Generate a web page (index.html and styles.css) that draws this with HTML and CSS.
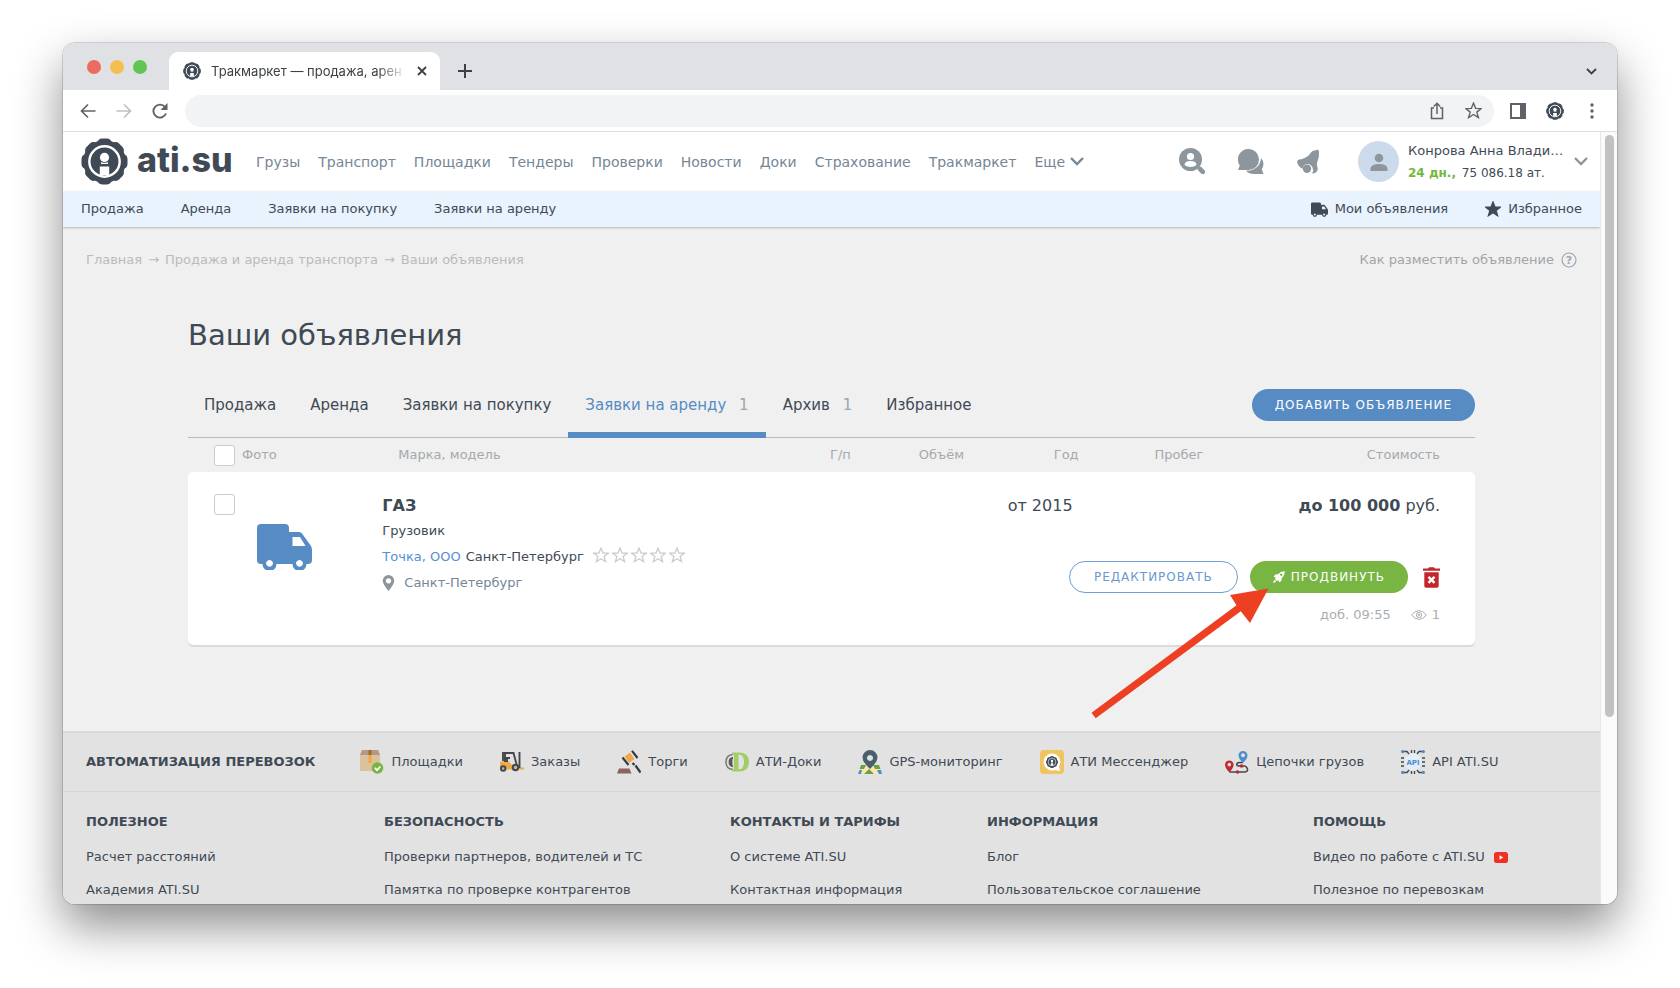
FILE: index.html
```html
<!DOCTYPE html>
<html lang="ru">
<head>
<meta charset="utf-8">
<title>Тракмаркет — продажа, аренда</title>
<link rel="stylesheet" href="styles.css">
</head>
<body>
<svg class="sprite" aria-hidden="true">
  <symbol id="i-gear" viewBox="0 0 48 48">
    <g fill="currentColor"><circle cx="24" cy="24" r="21.8"/>
    <rect x="16.500" y="0.500" width="15" height="47" rx="5"/><rect x="16.500" y="0.500" width="15" height="47" rx="5" transform="rotate(45 24 24)"/><rect x="16.500" y="0.500" width="15" height="47" rx="5" transform="rotate(90 24 24)"/><rect x="16.500" y="0.500" width="15" height="47" rx="5" transform="rotate(135 24 24)"/></g>
    <circle cx="24" cy="24" r="15.500" fill="none" stroke="#fff" stroke-width="2.500"/>
    <circle cx="24" cy="19.800" r="4.700" fill="#fff"/>
    <path d="M19.200 29h9.600v9h-9.600z" fill="#fff"/>
    <path d="M20.500 24.500q3.500 1.800 7 0v2h-7z" fill="#fff"/>
  </symbol>
  <symbol id="i-truck" viewBox="0 0 55 46"><path fill="currentColor" fill-rule="evenodd" d="M4 0H28a4 4 0 0 1 4 4V8H42q2 0 3 1.500L54 22q1 2 1 4V36a4 4 0 0 1-4 4H49.500A7 7 0 0 1 35.500 40H19.500A7 7 0 0 1 5.500 40H4a4 4 0 0 1-4-4V4a4 4 0 0 1 4-4ZM35.500 13V22H48.500L43 13ZM12.500 36a3.400 3.400 0 1 0 .01 0ZM42.500 36a3.400 3.400 0 1 0 .01 0Z"/></symbol>
  <symbol id="i-chev" viewBox="0 0 14 9"><path d="M1 1l6 6 6-6" fill="none" stroke="currentColor" stroke-width="2.400"/></symbol>
  <symbol id="i-star" viewBox="0 0 16 16"><path d="M8 1l2 5 5.200.2-4.100 3.300 1.500 5.200L8 11.800l-4.600 2.900 1.500-5.200L.8 6.200 6 6z" stroke="currentColor" stroke-width="1.300"/></symbol>
</svg>
<div class="window">
  <div class="tabstrip">
    <div class="lights"><i class="red"></i><i class="amber"></i><i class="green"></i></div>
    <div class="tab">
      <svg class="favicon"><use href="#i-gear"/></svg>
      <span class="tab-title">Тракмаркет — продажа, арен</span>
      <button class="bare" aria-label="Закрыть"><svg width="10" height="10" viewBox="0 0 10 10"><path d="M1 1l8 8M9 1l-8 8" stroke="#3c4043" stroke-width="1.800"/></svg></button>
    </div>
    <button class="bare new-tab" aria-label="Новая вкладка"><svg width="14" height="14" viewBox="0 0 14 14"><path d="M7 0v14M0 7h14" stroke="#3c4043" stroke-width="2"/></svg></button>
    <button class="bare tab-search" aria-label="Поиск вкладок"><svg width="11" height="7" viewBox="0 0 11 7"><path d="M1 1l4.500 4.500L10 1" fill="none" stroke="#3c4043" stroke-width="1.800"/></svg></button>
  </div>
  <div class="toolbar">
    <button class="bare" aria-label="Назад"><svg width="16" height="16" viewBox="0 0 16 16"><path d="M15.500 8H2M8 1.500L1.500 8 8 14.500" fill="none" stroke="#5f6368" stroke-width="1.700"/></svg></button>
    <button class="bare" aria-label="Вперёд"><svg width="16" height="16" viewBox="0 0 16 16"><path d="M.5 8H14M8 1.500L14.500 8 8 14.500" fill="none" stroke="#bdc1c6" stroke-width="1.700"/></svg></button>
    <button class="bare" aria-label="Обновить"><svg width="16" height="16" viewBox="0 0 16 16"><path d="M14 10.500A6.500 6.500 0 1 1 13 4" fill="none" stroke="#5f6368" stroke-width="1.900"/><path d="M15.500 0v7H8.500z" fill="#5f6368"/></svg></button>
    <div class="omnibox">
      <input type="text" aria-label="Адрес">
      <button class="bare" aria-label="Поделиться"><svg width="16" height="18" viewBox="0 0 16 18"><path d="M5 6H2.500v10.500h11V6H11M8 12V1.500M4.800 4.500L8 1.300l3.200 3.200" fill="none" stroke="#5f6368" stroke-width="1.500"/></svg></button>
      <button class="bare star-out" aria-label="В закладки"><svg width="17" height="17"><use href="#i-star"/></svg></button>
    </div>
    <button class="bare" aria-label="Боковая панель"><svg width="16" height="16" viewBox="0 0 16 16"><path d="M1 1h14v14H1z" fill="#fff" stroke="#5f6368" stroke-width="2"/><path d="M10 1h5v14h-5z" fill="#5f6368"/></svg></button>
    <button class="bare" aria-label="Профиль"><svg class="favicon"><use href="#i-gear"/></svg></button>
    <button class="bare" aria-label="Меню"><svg width="16" height="16" viewBox="0 0 16 16" fill="#5f6368"><circle cx="8" cy="2" r="1.700"/><circle cx="8" cy="8" r="1.700"/><circle cx="8" cy="14" r="1.700"/></svg></button>
  </div>
  <div class="viewport">
    <div class="page">
      <header class="header">
        <a class="logo" href="#"><svg class="logo-mark"><use href="#i-gear"/></svg><span>ati.su</span></a>
        <nav class="mainnav">
          <a href="#">Грузы</a><a href="#">Транспорт</a><a href="#">Площадки</a><a href="#">Тендеры</a><a href="#">Проверки</a><a href="#">Новости</a><a href="#">Доки</a><a href="#">Страхование</a><a href="#">Тракмаркет</a><a href="#" class="more">Еще <svg width="14" height="9"><use href="#i-chev"/></svg></a>
        </nav>
        <div class="tools">
          <button class="bare" aria-label="Поиск контакта"><svg width="26" height="27" viewBox="0 0 26 27"><circle cx="11.500" cy="11.500" r="11.500" fill="#8d969d"/><path d="M18 18l2.500 2.500" stroke="#8d969d" stroke-width="2.500"/><path d="M21 21l2.800 2.800" stroke="#8d969d" stroke-width="4.600" stroke-linecap="round"/><circle cx="11.500" cy="8.500" r="3.600" fill="#fff"/><path d="M5.500 17q0-4 6-4t6 4q-2.500 2-6 2t-6-2z" fill="#fff"/></svg></button>
          <button class="bare" aria-label="Сообщения"><svg width="26" height="26" viewBox="0 0 26 26" fill="#8d969d"><path d="M23 9q3.500 4 2 8.500-.5 1.500-1.300 2.500l1.800 5H16q-5 0-8-3.200 9 0 13-6 2-3.500 2-6.800z"/><path d="M10.500 0A10.500 10.500 0 0 1 10.500 21H0l1.800-4.500A10.500 10.500 0 0 1 10.500 0z"/></svg></button>
          <button class="bare" aria-label="Уведомления"><svg width="24" height="25" viewBox="0 0 24 25" fill="#8d969d"><path d="M20 .5q2 .3 2 2.500Q22.300 9 20.500 12.500q-1 2-.3 4.500 1 3 0 5-1.500 2.500-5.200 2.500 2-3 .5-6Q13 13.500 8 15.500 5.500 17 5.500 20 1 17 .2 13.500 0 11 2 10.500q2.500 0 4.500-1Q11 8 14 3.500 16 1 18.500 1.500z"/><circle cx="10" cy="19.700" r="4.200"/></svg></button>
        </div>
        <div class="user">
          <span class="avatar"><svg width="18" height="18" viewBox="0 0 18 18" fill="#8d969d"><circle cx="9" cy="5" r="4.300"/><path d="M.5 18v-2.500Q1 11 9 11t8.500 4.500V18z"/></svg></span>
          <div class="user-text"><div>Конрова Анна Влади…</div><div class="balance"><b>24 дн.,</b> 75 086.18 ат.</div></div>
          <button class="bare grey" aria-label="Меню пользователя"><svg width="14" height="9"><use href="#i-chev"/></svg></button>
        </div>
      </header>
      <nav class="subnav">
        <a href="#">Продажа</a><a href="#">Аренда</a><a href="#">Заявки на покупку</a><a href="#">Заявки на аренду</a>
        <a href="#" class="push"><svg width="17" height="15"><use href="#i-truck"/></svg>Мои объявления</a><a href="#"><svg width="16" height="16" fill="currentColor"><use href="#i-star"/></svg>Избранное</a>
      </nav>
      <div class="crumbs">
        <div class="trail"><a href="#">Главная</a><span>→</span><a href="#">Продажа и аренда транспорта</a><span>→</span><a href="#">Ваши объявления</a></div>
        <a href="#" class="help">Как разместить объявление <svg width="16" height="16" viewBox="0 0 16 16"><circle cx="8" cy="8" r="7" fill="none" stroke="currentColor" stroke-width="1.200"/><text x="8" y="12" text-anchor="middle">?</text></svg></a>
      </div>
      <main class="main">
        <h1>Ваши объявления</h1>
        <div class="tabs">
          <a href="#">Продажа</a><a href="#">Аренда</a><a href="#">Заявки на покупку</a><a href="#" class="active">Заявки на аренду <span>1</span></a><a href="#">Архив <span>1</span></a><a href="#">Избранное</a>
          <button class="btn blue">ДОБАВИТЬ ОБЪЯВЛЕНИЕ</button>
        </div>
        <table class="ads">
          <colgroup><col class="c-photo"><col class="c-model"><col class="c-load"><col class="c-vol"><col class="c-year"><col class="c-run"><col class="c-price"></colgroup>
          <thead><tr><th class="first"><label><input type="checkbox">Фото</label></th><th class="model">Марка, модель</th><th>Г/п</th><th>Объём</th><th>Год</th><th>Пробег</th><th class="last">Стоимость</th></tr></thead>
          <tbody>
            <tr class="values"><td class="first" rowspan="2"><div class="photo"><input type="checkbox" aria-label="Выбрать ГАЗ"><svg width="55" height="46"><use href="#i-truck"/></svg></div></td>
              <td class="info" rowspan="2"><strong>ГАЗ</strong><div>Грузовик</div><div class="firm"><a href="#">Точка, ООО</a> Санкт-Петербург <span class="stars"><svg><use href="#i-star"/></svg><svg><use href="#i-star"/></svg><svg><use href="#i-star"/></svg><svg><use href="#i-star"/></svg><svg><use href="#i-star"/></svg></span></div><div class="place"><svg width="13" height="16" viewBox="0 0 13 16"><path fill="#8d969d" fill-rule="evenodd" d="M6.500 0A5.800 5.800 0 0 1 12.300 5.800Q12.300 9 6.500 16 .7 9 .7 5.800A5.800 5.800 0 0 1 6.500 0zM6.500 3.200a2.700 2.700 0 1 0 .01 0z"/></svg>Санкт-Петербург</div></td>
              <td></td><td></td><td class="year">от 2015</td><td></td><td class="last"><b>до 100 000</b> руб.</td></tr>
            <tr><td class="last actions" colspan="5">
              <div class="buttons"><button class="btn outline">РЕДАКТИРОВАТЬ</button><button class="btn green"><svg width="12" height="12" viewBox="0 0 12 12"><path fill="#fff" fill-rule="evenodd" d="M11.700.3Q7.500.2 5 3.200L2.200 3.500.5 6l2.300.2Q2 7.500 2 8.200L3.800 10q.8 0 2-.8L6 11.500l2.500-1.700.3-2.800Q11.800 4.500 11.700.3zM8.300 2.500a1.200 1.200 0 1 1-.01 0zM1.500 8.800Q.3 9.800.2 11.800q2-.1 3-1.300z"/></svg>ПРОДВИНУТЬ</button><button class="bare" aria-label="Удалить"><svg width="17" height="21" viewBox="0 0 17 21"><path d="M0 1.500h5L6 .3h5l1 1.200h5v2.200H0z" fill="#c1272d"/><path d="M1.300 5.300h14.400V19q0 1.800-1.800 1.800H3.100Q1.300 20.800 1.300 19z" fill="#c1272d"/><path d="M5.500 9.800l6 6M11.500 9.800l-6 6" stroke="#fff" stroke-width="2.400"/></svg></button></div>
              <div class="meta"><span>доб. 09:55</span><span class="views"><svg width="16" height="10" viewBox="0 0 16 10" fill="none" stroke="currentColor"><path d="M.6 5Q4 .6 8 .6T15.400 5Q12 9.400 8 9.400T.6 5z"/><circle cx="8" cy="5" r="2.600"/><circle cx="8" cy="5" r=".8"/></svg>1</span></div>
            </td></tr>
          </tbody>
        </table>
        <svg class="arrow" width="180" height="132" viewBox="0 0 180 132" fill="#ed4023"><path d="M.5 124.700L145.500 17.200 139 7 177.500.5 159 35 149.800 23.200 4.700 130.300z"/></svg>
      </main>
      <footer>
        <div class="auto">
          <h2>АВТОМАТИЗАЦИЯ ПЕРЕВОЗОК</h2>
          <a href="#"><svg viewBox="0 0 24 24"><path d="M2 0h16l2 5v16H0V5z" fill="#dcc29c"/><path d="M2 0h16l2 5H0z" fill="#b39a86"/><path d="M8.500 0h3v5h-3z" fill="#a3682b"/><path d="M8.500 5h3v8h-3z" fill="#efa93d"/><circle cx="17.500" cy="18" r="5.800" fill="#78b543"/><path d="M14.800 17.800l2.200 2.300 3.400-3.600" fill="none" stroke="#fff" stroke-width="1.800"/></svg>Площадки</a>
          <a href="#"><svg viewBox="0 0 24 24"><path d="M1 11.500h8l2 3h6v5H0v-7z" fill="#efa94a"/><path d="M18 17.500h6v2h-6z" fill="#efa94a"/><path d="M3 11V3h10.500l3.500 13M5 3v5h5M19.500 2v16" fill="none" stroke="#46474b" stroke-width="1.900"/><path d="M4 7h4v5H4z" fill="#46474b"/><g fill="#bbb" stroke="#46474b" stroke-width="2"><circle cx="3.200" cy="18.500" r="2.200"/><circle cx="15.500" cy="17.500" r="2.700"/></g></svg>Заказы</a>
          <a href="#"><svg viewBox="0 0 24 24"><path d="M2 18.500h10.500l2 5H0z" fill="#8c6558"/><path d="M7.500 6.500l5.500-4 4.500 6.500-5.500 4z" fill="#efa94a"/><path d="M5.500 7.500l6 7.500M15 .8l5.500 7.200M15.500 13l2 2M18.500 15.500l5 7" stroke="#333a40" stroke-width="2.200"/></svg>Торги</a>
          <a href="#"><svg viewBox="0 0 24 24"><path d="M8 4.500Q1 5 1 12t7 7.500" fill="none" stroke="#777" stroke-width="1.500"/><path d="M8 8Q4.500 8.500 4.500 12T8 16.500M6.500 9v7" fill="none" stroke="#555" stroke-width="1.800"/><path fill-rule="evenodd" fill="#a2cc66" d="M7 2.500h7q10 0 10 9.500t-10 9.500H7v-2h2v-15H7zM13.500 4.500v15q5.500-.2 5.500-7.500t-5.500-7.500z"/></svg>АТИ-Доки</a>
          <a href="#"><svg viewBox="0 0 24 24"><path d="M3 15h18l3 9H0z" fill="#f8e7b0"/><path d="M3 15h5l-2 4H1.600zM15 15h6l1.500 4H17zM6 24l5-5 5 5z" fill="#6f9f45"/><path d="M1.600 20H4l-1 4H0zM19 20h4l1 4h-3z" fill="#4f8ccb"/><path fill="#4a5f6d" fill-rule="evenodd" d="M12 0a7.500 7.500 0 0 1 7.500 7.500Q19.500 12 12 19 4.500 12 4.500 7.500A7.500 7.500 0 0 1 12 0zM12 5a3 3 0 1 0 .01 0z"/></svg>GPS-мониторинг</a>
          <a href="#"><svg viewBox="0 0 24 24"><rect width="24" height="24" rx="4" fill="#efc561"/><path d="M12 3.500a8.500 8.500 0 1 0 3 16.500l5 1-1-4.500A8.500 8.500 0 0 0 12 3.500z" fill="#fff"/><svg x="6" y="6" width="12" height="12" viewBox="0 0 48 48"><use href="#i-gear" width="48" height="48"/></svg></svg>АТИ Мессенджер</a>
          <a href="#"><svg viewBox="0 0 24 24"><path d="M4.500 22H20q3-.5 2.500-3t-3-3H14q-3-.3-2-2.500.6-1 3-1h3" fill="none" stroke="#46474b" stroke-width="1.500"/><path fill="#c1272d" fill-rule="evenodd" d="M4.300 10.500a4.300 4.300 0 0 1 4.300 4.300q0 3-4.300 7.700Q0 17.800 0 14.800a4.300 4.300 0 0 1 4.300-4.300zm0 2.300a1.800 1.800 0 1 0 .01 0z"/><path fill="#4f8ccb" fill-rule="evenodd" d="M18 1a4.500 4.500 0 0 1 4.500 4.500q0 3-4.500 7.500-4.500-4.500-4.500-7.500A4.500 4.500 0 0 1 18 1zm0 2.300a2 2 0 1 0 .01 0z"/><circle cx="16.500" cy="16" r="1.800" fill="#c1272d"/><circle cx="12.500" cy="22" r="1.800" fill="#c1272d"/></svg>Цепочки грузов</a>
          <a href="#"><svg viewBox="0 0 24 24"><circle cx="12" cy="12" r="8.500" fill="#e2eefa"/><path d="M0 8h3M0 12h3M0 16h3M21 8h3M21 12h3M21 16h3M10.500 0v3M13.500 0v3M10.500 21v3M13.500 21v3M2 1.500h4l2 2.500M22 1.500h-4L16 4M2 22.500h4L8 20M22 22.500h-4L16 20" fill="none" stroke="#46474b" stroke-width="1.400"/><g fill="#4f8ccb"><circle cx="1.600" cy="1.600" r="1.600"/><circle cx="22.400" cy="1.600" r="1.600"/><circle cx="1.600" cy="22.400" r="1.600"/><circle cx="22.400" cy="22.400" r="1.600"/></g><text class="api" x="12" y="14.500" text-anchor="middle">API</text></svg>API ATI.SU</a>
        </div>
        <div class="cols">
          <section><h2>ПОЛЕЗНОЕ</h2><a href="#">Расчет расстояний</a><a href="#">Академия ATI.SU</a></section>
          <section><h2>БЕЗОПАСНОСТЬ</h2><a href="#">Проверки партнеров, водителей и ТС</a><a href="#">Памятка по проверке контрагентов</a></section>
          <section><h2>КОНТАКТЫ И ТАРИФЫ</h2><a href="#">О системе ATI.SU</a><a href="#">Контактная информация</a></section>
          <section><h2>ИНФОРМАЦИЯ</h2><a href="#">Блог</a><a href="#">Пользовательское соглашение</a></section>
          <section><h2>ПОМОЩЬ</h2><a href="#">Видео по работе с ATI.SU <svg width="14" height="11" viewBox="0 0 14 11"><rect width="14" height="11" rx="2.500" fill="#ee3124"/><path d="M5.500 3.300v4.400L9.300 5.500z" fill="#fff"/></svg></a><a href="#">Полезное по перевозкам</a></section>
        </div>
      </footer>
    </div>
    <div class="scrollbar"><div class="thumb"></div></div>
  </div>
</div>
</body>
</html>
```

FILE: styles.css
```css
* { box-sizing: border-box; }
body { margin: 0; height: 100vh; padding: 43px 63px 84px; display: flex; background: #fff; color: #3f4a55; font: 13px/20px "DejaVu Sans", sans-serif; overflow: hidden; }
a { color: inherit; text-decoration: none; }
h1, h2 { margin: 0; }
svg { flex: none; }
.sprite { position: absolute; width: 0; height: 0; }
.bare { display: flex; align-items: center; justify-content: center; padding: 0; border: 0; background: none; color: inherit; }
.window { flex: 1; min-width: 0; display: flex; flex-direction: column; overflow: hidden; border-radius: 12px; background: #fff; box-shadow: 0 0 0 1px rgba(0,0,0,.14), 0 22px 48px rgba(0,0,0,.45); }

.tabstrip { flex: none; display: flex; align-items: flex-end; height: 47px; padding: 0 20px 0 24px; background: #dfe1e5; }
.lights { display: flex; gap: 9px; padding-bottom: 16px; margin-right: 22px; }
.lights i { width: 14px; height: 14px; border-radius: 50%; }
.red { background: #ed6a5e; }
.amber { background: #f5bf4f; }
.green { background: #61c554; }
.tab { display: flex; align-items: center; gap: 10px; width: 271px; height: 38px; padding: 0 13px 0 14px; border-radius: 9px 9px 0 0; background: #fff; }
.favicon { width: 18px; height: 18px; color: #3f4a55; }
.tab-title { flex: 1; white-space: nowrap; color: #3c4043; font: 13px/20px Inter, sans-serif; mask-image: linear-gradient(90deg, #000 85%, transparent); }
.new-tab { height: 38px; margin-left: 18px; }
.tab-search { height: 38px; margin-left: auto; }

.toolbar { flex: none; display: flex; align-items: center; gap: 20px; height: 42px; padding: 0 17px; border-bottom: 1px solid #dcdee1; }
.omnibox { flex: 1; display: flex; align-items: center; gap: 20px; height: 32px; margin: 0 -5px 0 -3px; padding: 0 12px 0 16px; border-radius: 16px; background: #f1f3f4; }
.omnibox input { flex: 1; min-width: 0; border: 0; background: none; outline: 0; }
.star-out { color: #5f6368; fill: none; }
.toolbar .omnibox + .bare { margin-left: 1px; }

.viewport { flex: 1; min-height: 0; display: flex; }
.page { flex: 1; min-width: 0; overflow: hidden; background: #f0f0f0; }
.scrollbar { width: 17px; padding: 3px 4px; background: #fafafa; border-left: 1px solid #e6e6e6; }
.thumb { width: 9px; height: 76%; border-radius: 5px; background: #c1c1c1; }

.header { display: flex; align-items: center; height: 59px; padding: 0 12px 0 18px; background: #fff; }
.logo { display: flex; align-items: center; gap: 9px; }
.logo-mark { width: 47px; height: 47px; }
.logo span { width: 92px; padding-bottom: 4px; font: 800 34px/44px Inter, sans-serif; }
.mainnav { display: flex; gap: 18px; margin-left: 27px; color: #758695; font-size: 14px; white-space: nowrap; }
.more { display: flex; align-items: center; gap: 5px; }
.tools { display: flex; gap: 33px; margin-left: auto; margin-right: 37px; }
.user { display: flex; align-items: center; }
.avatar { display: flex; align-items: center; justify-content: center; width: 41px; height: 41px; margin-right: 9px; border-radius: 50%; background: #ccdbec; }
.user-text { width: 157px; margin-right: 9px; line-height: 22px; white-space: nowrap; }
.balance { font-size: 12px; }
.balance b { margin-right: 2px; color: #72b83c; }
.grey { color: #8d969d; }

.subnav { position: relative; display: flex; gap: 37px; align-items: center; height: 36px; padding: 0 18px; background: #e8f3fe; box-shadow: 0 1px 2px rgba(0,0,0,.25); }
.subnav a { display: flex; align-items: center; gap: 7px; }
.push { margin-left: auto; }

.crumbs { display: flex; justify-content: space-between; padding: 23px 23px 0; color: #bbb; }
.trail { display: flex; gap: 6px; }
.help { display: flex; align-items: center; gap: 7px; color: #a0a5a9; }
.help text { font-size: 11px; font-weight: bold; fill: currentColor; }

.main { position: relative; padding: 45px 125px 86px; }
h1 { font-size: 29px; line-height: 40px; font-weight: 400; }
.tabs { display: flex; margin-top: 28px; border-bottom: 1px solid #b8bbbd; font-size: 15px; line-height: 20px; white-space: nowrap; }
.tabs a { height: 54px; padding: 12px 17px 0; }
.tabs a:first-child { padding-left: 16px; }
.tabs a.active { margin-bottom: -1px; height: 55px; color: #568bc4; border-bottom: 6px solid #568bc4; }
.tabs span { margin-left: 8px; color: #a0a5a9; }
.btn { display: inline-flex; align-items: center; gap: 6px; height: 32px; padding: 0 22px; border: 1px solid transparent; border-radius: 16px; color: #fff; font: 12px/20px "DejaVu Sans", sans-serif; letter-spacing: 1px; white-space: nowrap; }
.blue { margin: 6px 0 0 auto; background: #568bc4; }
.green.btn { background: #78b543; }
.outline { padding: 0 24px; border-color: #6f9fd4; background: #fff; color: #6a98cf; }

.ads { width: 100%; table-layout: fixed; border-collapse: separate; border-spacing: 0; }
.c-photo { width: 15.1%; }
.c-model { width: 27.8%; }
.c-load { width: 8.6%; }
.c-vol { width: 8.8%; }
.c-year { width: 8.9%; }
.c-run { width: 9.7%; }
.c-price { width: 21.1%; }
.ads th, .ads td { padding: 0; text-align: right; font-weight: 400; }
.ads th { height: 34px; color: #a5a9ad; }
.ads th.first, .ads td.first { padding-left: 26px; text-align: left; }
.ads th.model { padding-left: 16px; text-align: left; }
.ads th.last, .ads td.last { padding-right: 35px; }
.ads label { display: flex; align-items: center; gap: 7px; }
.ads input { appearance: none; flex: none; width: 21px; height: 21px; margin: 0; border: 1px solid #ccc; border-radius: 3px; background: #fff; }
.ads td { vertical-align: top; background: #fff; }
.ads td.first, .ads td.info, .ads td.actions { box-shadow: 0 2px 0 #dadada; }
.ads td.first { border-radius: 5px 0 0 5px; }
.ads .values td.last { border-radius: 0 5px 0 0; }
.ads td.actions { border-radius: 0 0 5px 0; }
.photo { display: flex; gap: 22px; padding-top: 22px; color: #568bc4; }
.photo svg { margin-top: 30px; }
.ads .values td { padding-top: 24px; font-size: 16px; }
.ads .values td.first { padding-top: 0; }
.ads .values td.year { padding-right: 6px; }
.ads .values td.info { text-align: left; font-size: 13px; line-height: 26px; white-space: nowrap; }
.info strong { display: block; font-size: 16px; line-height: 20px; padding-bottom: 2px; }
.firm { display: flex; align-items: center; gap: 5px; }
.firm a { color: #568fd0; }
.stars { display: flex; gap: 3px; padding: 0 0 4px 4px; color: #ccc; fill: none; }
.stars svg { width: 16px; height: 16px; }
.place { display: flex; align-items: center; gap: 9px; color: #758695; }
.ads td.actions { padding-top: 45px; height: 129px; }
.buttons { display: flex; justify-content: flex-end; gap: 12px; }
.buttons .bare { margin-left: 3px; }
.meta { display: flex; justify-content: flex-end; gap: 20px; margin-top: 12px; color: #a9adb1; }
.views { display: flex; align-items: center; gap: 5px; }
.arrow { position: absolute; right: 329px; bottom: 11px; }

footer { background: #e2e2e2; border-top: 2px solid #d9d9d9; }
footer h2 { font-size: 13px; line-height: 20px; white-space: nowrap; }
.auto { display: flex; align-items: center; gap: 37px; height: 59px; padding: 0 23px; border-bottom: 1px solid #d6d6d6; white-space: nowrap; }
.auto h2 { margin-right: 8px; }
.auto a { display: flex; align-items: center; gap: 7px; }
.auto a > svg { width: 24px; height: 24px; }
.api { font: bold 7px "DejaVu Sans", sans-serif; fill: #4f8ccb; }
.cols { display: grid; grid-template-columns: 298fr 346fr 257fr 326fr 264fr; padding: 18px 23px; white-space: nowrap; }
.cols section { display: flex; flex-direction: column; gap: 13px; min-width: 0; }
.cols h2 { padding: 2px 0; }
.cols a { display: flex; align-items: center; gap: 9px; }
```
